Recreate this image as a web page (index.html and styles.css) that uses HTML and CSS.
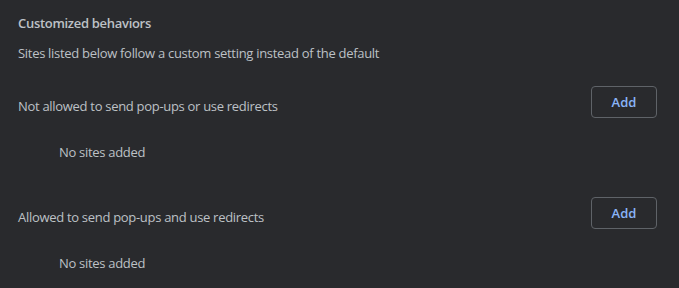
FILE: index.html
```html
<!DOCTYPE html>
<html lang="en">
<head>
<meta charset="utf-8">
<title>Pop-ups and redirects</title>
<link rel="stylesheet" href="styles.css">
</head>
<body>
<section class="section">
  <h2 class="heading">Customized behaviors</h2>
  <p class="subtitle">Sites listed below follow a custom setting instead of the default</p>

  <div class="row row-first">
    <span class="label">Not allowed to send pop-ups or use redirects</span>
    <button class="add-btn" type="button">Add</button>
  </div>
  <div class="empty empty-first">No sites added</div>

  <div class="row row-second">
    <span class="label">Allowed to send pop-ups and use redirects</span>
    <button class="add-btn" type="button">Add</button>
  </div>
  <div class="empty empty-second">No sites added</div>
</section>
</body>
</html>
```

FILE: styles.css
```css
html, body {
  margin: 0;
  padding: 0;
  background: #292a2d;
}

body {
  font-family: "Open Sans", "Noto Sans", sans-serif;
  font-size: 13px;
  letter-spacing: -0.3px;
  color: #bdc1c6;
  width: 679px;
  height: 288px;
  overflow: hidden;
}

.section {
  padding: 13px 22px 0 18px;
}

.heading {
  margin: 0;
  font-size: 13px;
  font-weight: 600;
  line-height: 20px;
  color: #bdc1c6;
}

.subtitle {
  margin: 10px 0 0;
  line-height: 20px;
}

.row {
  display: flex;
  justify-content: space-between;
  align-items: flex-start;
}

.row-first {
  margin-top: 23px;
}

.row-second {
  margin-top: 35px;
}

.label {
  line-height: 20px;
  padding-top: 10px;
}

.add-btn {
  width: 66px;
  height: 32px;
  box-sizing: border-box;
  background: transparent;
  border: 1px solid #5f6368;
  border-radius: 4px;
  color: #8ab4f8;
  font-family: inherit;
  font-size: 13px;
  font-weight: 600;
  letter-spacing: 0;
  padding: 0;
  cursor: pointer;
}

.empty {
  padding-left: 41px;
  line-height: 20px;
}

.empty-first {
  margin-top: 24px;
}

.empty-second {
  margin-top: 24px;
}
```
